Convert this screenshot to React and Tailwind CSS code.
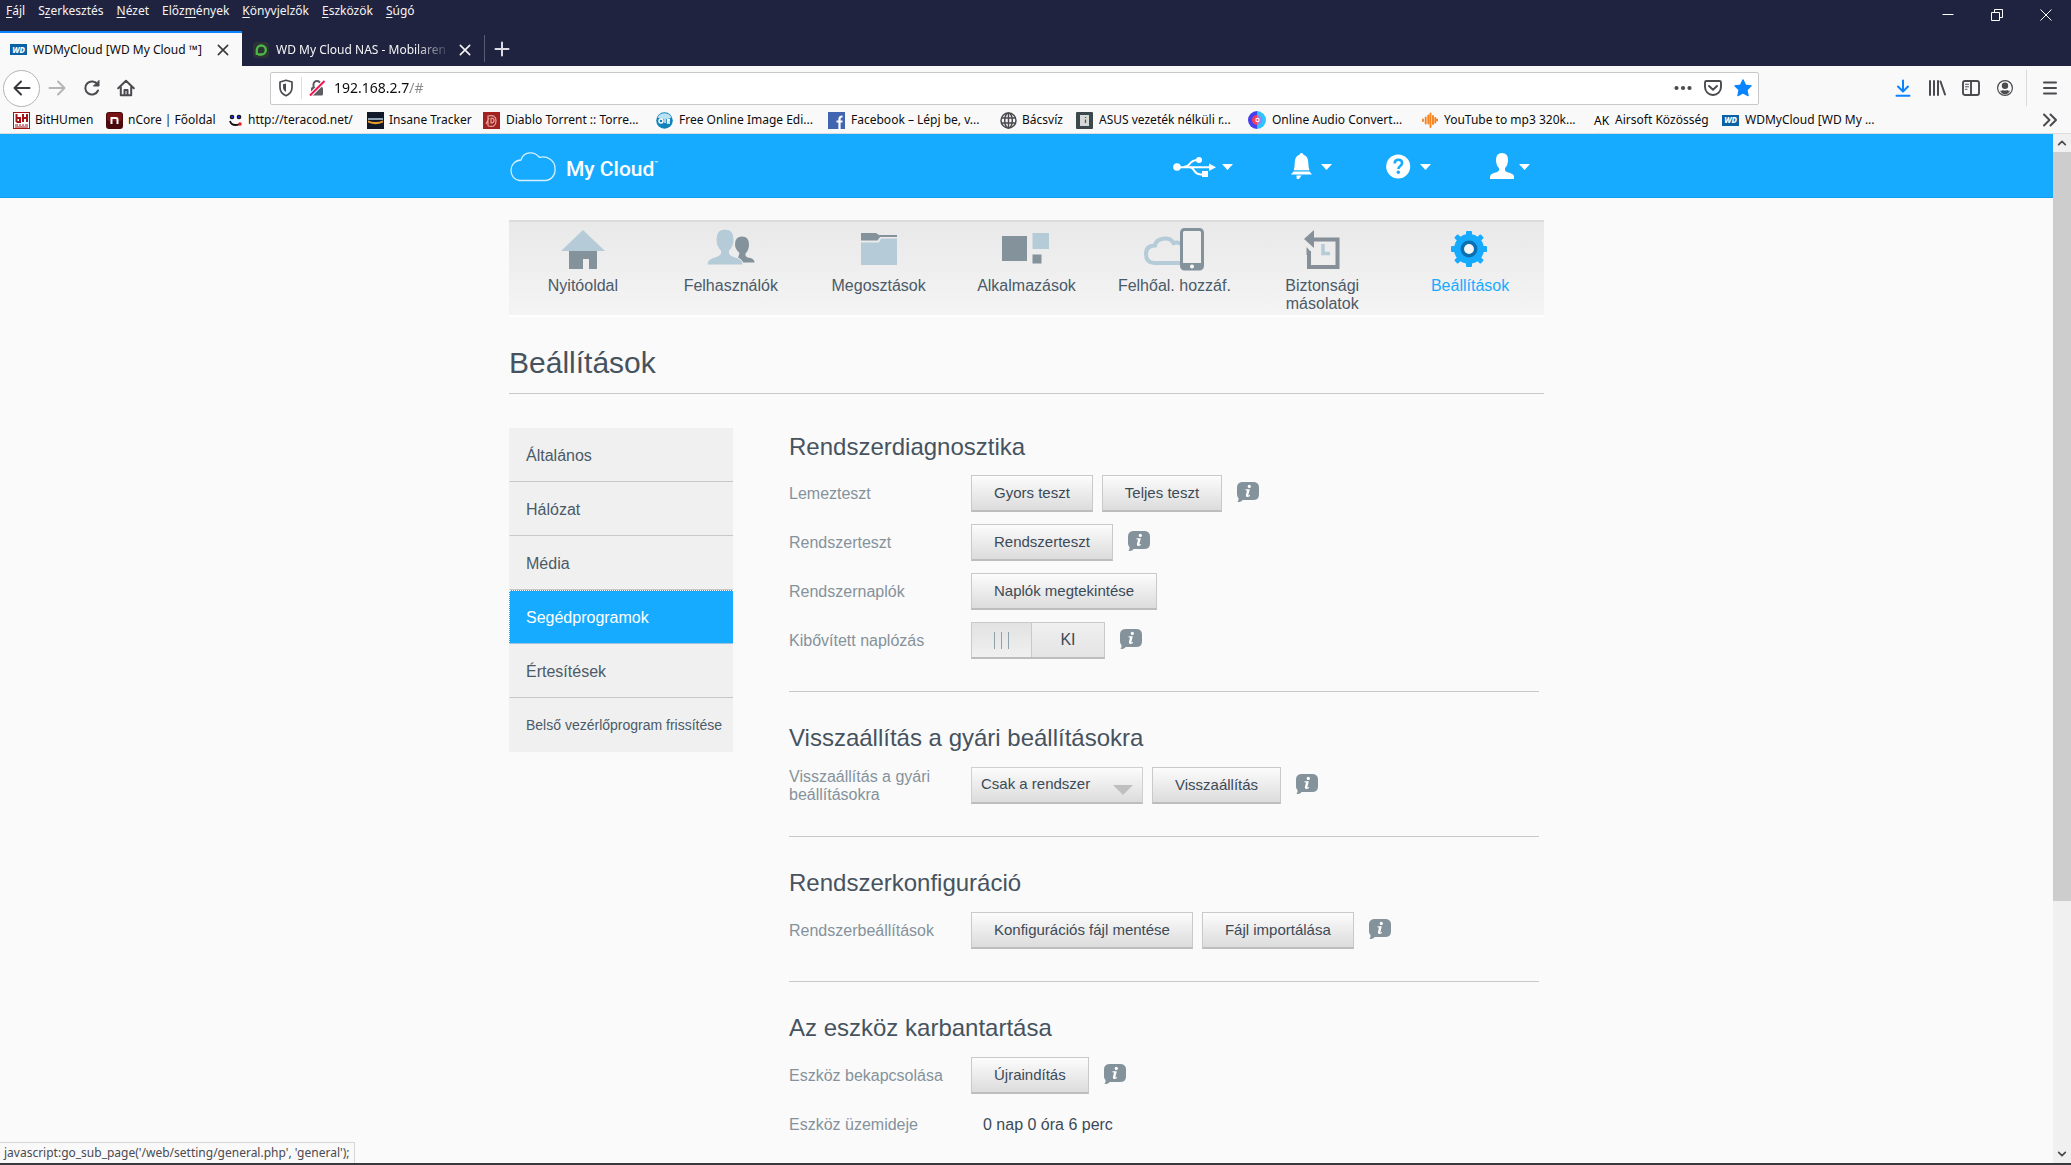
import React from "react";

const UI = "font-['Noto_Sans','Open_Sans',sans-serif]";

/* ---------- browser glyphs ---------- */

const Line = ({ size = "size-[18px]", children, w = 2 }) => (
  <svg viewBox="0 0 18 18" className={`${size} shrink-0`} fill="none" stroke="currentColor" strokeWidth={w} strokeLinecap="round" strokeLinejoin="round" aria-hidden="true">
    {children}
  </svg>
);

const CloseX = () => (
  <Line size="size-[14px]" w={2}>
    <path d="M3 3 15 15M15 3 3 15" />
  </Line>
);

const WdBadge = () => (
  <span className="flex h-[11px] w-[17px] shrink-0 items-center justify-center bg-[#0a62a6] text-[8px] font-extrabold italic leading-none text-white">WD</span>
);

const Favicons = {
  bh: (
    <svg viewBox="0 0 17 17" className="size-[17px] shrink-0" aria-hidden="true">
      <rect width="17" height="17" fill="#a01416" />
      <rect x="1" y="1" width="15" height="15" fill="#fff" />
      <path d="M3.5 2v8M3.5 6h3.5v4H3.5M10 2v8M14 2v8M10 6h4" stroke="#a01416" strokeWidth="2" fill="none" />
      <path d="M2 13h3M6 13h2M9 13h2M12 13h3M2 15h13" stroke="#a01416" strokeWidth="1.2" />
    </svg>
  ),
  ncore: (
    <svg viewBox="0 0 17 17" className="size-[17px] shrink-0" aria-hidden="true">
      <rect width="17" height="17" rx="3" fill="#4a0a0a" />
      <rect x="1" y="1" width="15" height="8" rx="2" fill="#7a1414" />
      <path d="M5.5 12V6h4.5q1.5 0 1.5 1.5V12" stroke="#fff" strokeWidth="2" fill="none" />
    </svg>
  ),
  teracod: (
    <svg viewBox="0 0 13 13" className="size-[13px] shrink-0" aria-hidden="true">
      <circle cx="3" cy="3" r="2.3" fill="#111" /><circle cx="10" cy="3" r="2.3" fill="#111" />
      <circle cx="3" cy="3" r="1.2" fill="#22e" /><circle cx="10" cy="3" r="1.2" fill="#22e" />
      <path d="M1 7q1 4 5.500 4t4-2" stroke="#111" strokeWidth="1.8" fill="none" />
      <circle cx="11" cy="10" r="1.7" fill="#f21818" />
    </svg>
  ),
  insane: (
    <svg viewBox="0 0 17 17" className="size-[17px] shrink-0" aria-hidden="true">
      <rect width="17" height="17" fill="#10182a" />
      <path d="M1 7h15" stroke="#b8cfe0" strokeWidth="1.500" />
      <path d="M1 8.500q7.500 3 15 0v2q-7.500 3.500-15 0z" fill="#e79a2b" />
    </svg>
  ),
  diablo: (
    <svg viewBox="0 0 17 17" className="size-[17px] shrink-0" aria-hidden="true">
      <rect width="17" height="17" fill="#a3211f" />
      <path d="M5 14V4q8-2 8 5t-8 5M8 6v5q3 0 3-2.500T8 6M3 12l3-6" stroke="#e2a7a2" strokeWidth="1.200" fill="none" />
    </svg>
  ),
  freeimg: (
    <svg viewBox="0 0 17 17" className="size-[17px] shrink-0" aria-hidden="true">
      <circle cx="8.500" cy="8.500" r="8.300" fill="#1183bd" />
      <path d="M1.500 5.500a8 8 0 0 1 14 0q-7 3-14 0" fill="#b9e2f5" />
      <circle cx="5" cy="9" r="2" stroke="#fff" strokeWidth="1.400" fill="none" />
      <path d="M9 7v4M14 7.500h-2.500v3.500H14M11.500 9H14" stroke="#fff" strokeWidth="1.300" fill="none" />
    </svg>
  ),
  facebook: (
    <svg viewBox="0 0 17 17" className="size-[17px] shrink-0" aria-hidden="true">
      <rect width="17" height="17" fill="#4165b0" />
      <path d="M11.500 17V7q0-2.500 3-2.500M8.500 9.500h6" stroke="#fff" strokeWidth="2.200" fill="none" />
    </svg>
  ),
  globe: (
    <svg viewBox="0 0 17 17" className="size-[17px] shrink-0" fill="none" stroke="#4a4a4f" strokeWidth="1.500" aria-hidden="true">
      <circle cx="8.500" cy="8.500" r="7.500" /><ellipse cx="8.500" cy="8.500" rx="3.800" ry="7.500" />
      <path d="M1.500 6h14M1.500 11h14M8.500 1v15" />
    </svg>
  ),
  asus: (
    <svg viewBox="0 0 17 17" className="size-[17px] shrink-0" aria-hidden="true">
      <rect width="17" height="17" rx="1" fill="#3c484c" />
      <rect x="4" y="3" width="9" height="11" fill="#d6d8d8" />
      <path d="M9.500 5v1M9.500 7.500V11" stroke="#555" strokeWidth="1.300" />
    </svg>
  ),
  audio: (
    <svg viewBox="0 0 18 18" className="size-[18px] shrink-0" aria-hidden="true">
      <path d="M9 0a9 9 0 0 0 0 18z" fill="#4440f2" /><path d="M9 0a9 9 0 0 1 0 18z" fill="#2fc4fb" />
      <path d="M9 4a5 5 0 0 0 0 10z" fill="#fb3d55" /><path d="M9 4a5 5 0 0 1 0 10z" fill="#8a86f5" />
      <circle cx="9.500" cy="9" r="2.300" fill="#f4e8f6" /><circle cx="9.500" cy="9" r="1" fill="#fb3d55" />
    </svg>
  ),
  wave: (
    <svg viewBox="0 0 16 16" className="size-[16px] shrink-0" stroke="#f5821f" strokeWidth="1.900" strokeLinecap="round" aria-hidden="true">
      <path d="M1 7.500v1.500M3.700 5.500v6M6.300 3.500v8M8.500 1.500v13.500M11 4v8M13.300 6v4.500M15.200 7.500v1" />
    </svg>
  ),
  ak: <span className="bg-white text-[12px] leading-[17px] text-black">AK</span>,
  wd: <WdBadge />,
};

const bookmarks = [
  { icon: "bh", label: "BitHUmen", w: "w-[93px]", gap: "gap-[5px]" },
  { icon: "ncore", label: "nCore | Főoldal", w: "w-[123px]", gap: "gap-[5px]" },
  { icon: "teracod", label: "http://teracod.net/", w: "w-[138px]" },
  { icon: "insane", label: "Insane Tracker", w: "w-[116px]", gap: "gap-[5px]" },
  { icon: "diablo", label: "Diablo Torrent :: Torre...", w: "w-[173px]" },
  { icon: "freeimg", label: "Free Online Image Edi...", w: "w-[172px]" },
  { icon: "facebook", label: "Facebook – Lépj be, v...", w: "w-[172px]" },
  { icon: "globe", label: "Bácsvíz", w: "w-[76px]", gap: "gap-[5px]" },
  { icon: "asus", label: "ASUS vezeték nélküli r...", w: "w-[172px]" },
  { icon: "audio", label: "Online Audio Convert...", w: "w-[174px]" },
  { icon: "wave", label: "YouTube to mp3 320k...", w: "w-[172px]" },
  { icon: "ak", label: "Airsoft Közösség", w: "w-[128px]" },
  { icon: "wd", label: "WDMyCloud [WD My ...", w: "w-[172px]" },
];

const menus = [
  ["", "F", "ájl"],
  ["S", "z", "erkesztés"],
  ["", "N", "ézet"],
  ["Előz", "m", "ények"],
  ["", "K", "önyvjelzők"],
  ["", "E", "szközök"],
  ["", "S", "úgó"],
];

function TitleBar() {
  return (
    <div className="flex h-[31px] items-start justify-between">
      <div className="flex gap-[13px] pl-[6px] pt-[2px] text-[12px] leading-[18px] text-[#f4f4f6]">
        {menus.map(([a, b, c]) => (
          <button key={a + b + c} type="button">
            {a}<span className="underline underline-offset-2">{b}</span>{c}
          </button>
        ))}
      </div>
      <div className="flex gap-[35px] pr-[18px] pt-[8px] text-white">
        <button type="button" aria-label="Kis méret"><svg viewBox="0 0 14 14" className="size-[14px]" stroke="currentColor" aria-hidden="true"><path d="M1.500 6.500h11" /></svg></button>
        <button type="button" aria-label="Előző méret"><svg viewBox="0 0 14 14" className="size-[14px]" stroke="currentColor" fill="none" aria-hidden="true"><path d="M1.500 4.500h8v8h-8zM4.500 4.500v-3h8v8h-3" /></svg></button>
        <button type="button" aria-label="Bezárás"><svg viewBox="0 0 14 14" className="size-[14px]" stroke="currentColor" aria-hidden="true"><path d="M1.500 1.500l11 11M12.500 1.500l-11 11" /></svg></button>
      </div>
    </div>
  );
}

function Tabs() {
  return (
    <div className="flex h-[35px] text-[12px]">
      <div className="flex w-[242px] items-center border-t-2 border-[#0a84ff] bg-[#f9f9fa] pl-[10px] pr-[12px] text-[#0c0c0d]">
        <WdBadge />
        <span className="ml-[6px] flex-1 whitespace-nowrap">WDMyCloud [WD My Cloud ™]</span>
        <button type="button" aria-label="Lap bezárása" className="text-[#38383d]"><CloseX /></button>
      </div>
      <div className="flex w-[242px] items-center pl-[11px] pr-[12px] pt-[2px] text-[#f4f4f6]">
        <svg viewBox="0 0 16 16" className="size-[16px] shrink-0" aria-hidden="true">
          <rect width="16" height="16" rx="4" fill="#2b3335" />
          <path d="M3.800 13V8a4.500 4.500 0 1 1 4.500 4.500H5" fill="none" stroke="#4fb748" strokeWidth="2.300" />
        </svg>
        <span className="ml-[7px] whitespace-nowrap [mask-image:linear-gradient(to_right,black_82%,rgba(0,0,0,0.15))]">WD My Cloud NAS - Mobilaren</span>
        <button type="button" aria-label="Lap bezárása" className="ml-auto"><CloseX /></button>
      </div>
      <div className="mt-[4px] h-[27px] w-px bg-[#5a5b70]" />
      <button type="button" aria-label="Új lap" className="ml-[8px] text-[#dcdce2]">
        <Line size="size-[18px]" w={2}><path d="M9 2.500v13M2.500 9h13" /></Line>
      </button>
    </div>
  );
}

function NavToolbar() {
  return (
    <div className="flex h-[44px] items-center text-[#4a4a4f]">
      <button type="button" aria-label="Vissza" className="ml-[3px] flex size-[37px] items-center justify-center rounded-full border border-[#b4b4b6] bg-white text-[#38383d]">
        <Line><path d="M16.500 9h-15M8 2.500 1.500 9 8 15.500" /></Line>
      </button>
      <button type="button" aria-label="Előre" className="ml-[8px] text-[#b5b5b7]"><Line><path d="M1.500 9h15M10 2.500 16.500 9 10 15.500" /></Line></button>
      <button type="button" aria-label="Frissítés" className="ml-[17px]">
        <Line><path d="M15 11.500A6.600 6.600 0 1 1 14.500 5.500" /><path d="M10.800 7H16V1.800z" fill="currentColor" strokeWidth="1" /></Line>
      </button>
      <button type="button" aria-label="Kezdőlap" className="ml-[16px]">
        <Line><path d="M1.200 9.200 9 1.800l7.800 7.400M3.800 8v8.200h10.400V8M7.500 16v-5h3v5" /></Line>
      </button>
      <div className="ml-[135px] flex h-[33px] flex-1 items-center rounded-[2px] border border-[#c9c9ca] bg-white pl-[6px] pr-[6px]">
        <Line w={1.700}><path d="M9 1.300 15 3v5.500c0 4-2.500 6.700-6 8.200-3.500-1.500-6-4.200-6-8.200V3z" /><path d="M9 4.500v8.500c-2-1.200-3-2.500-3-5V5.300z" fill="currentColor" stroke="none" /></Line>
        <div className="mx-[6px] h-[22px] w-px bg-[#dedee0]" />
        <svg viewBox="0 0 18 18" className="size-[18px] shrink-0" aria-hidden="true">
          <rect x="3" y="8" width="12" height="8.500" rx="1.500" fill="#5c5c61" />
          <path d="M5.500 8V5.500a3.500 3.500 0 0 1 7 0V8" fill="none" stroke="#5c5c61" strokeWidth="2" />
          <path d="M2.500 16 16.500 2" stroke="#fff" strokeWidth="4" /><path d="M2 16.500 16.500 2" stroke="#f5134f" strokeWidth="2" />
        </svg>
        <label htmlFor="url" className="sr-only">Cím</label>
        <input
          id="url"
          type="text"
          defaultValue="192.168.2.7/#"
          className="ml-[8px] min-w-0 flex-1 bg-[linear-gradient(to_right,#0c0c0d_76px,#8a8a8f_76px)] bg-clip-text text-[14px] leading-[20px] text-transparent outline-none"
        />
        <div className="flex items-center gap-[12px]">
          <svg viewBox="0 0 18 18" className="size-[18px]" fill="currentColor" aria-hidden="true"><circle cx="2.500" cy="9" r="2.100" /><circle cx="9" cy="9" r="2.100" /><circle cx="15.500" cy="9" r="2.100" /></svg>
          <Line w={1.900}><path d="M2.500 2h13q1.500 0 1.500 1.500V8c0 4.500-3.500 8-8 8s-8-3.500-8-8V3.500Q1 2 2.500 2z" /><path d="M5 7l4 3.800L13 7" /></Line>
          <svg viewBox="0 0 18 18" className="size-[18px]" fill="#0a84ff" stroke="#0a84ff" strokeLinejoin="round" strokeWidth="1.200" aria-hidden="true"><path d="M9 .8l2.500 5.300 5.700.7-4.200 4 1.100 5.900L9 13.900l-5.100 2.800 1.100-5.900-4.200-4 5.700-.7z" /></svg>
        </div>
      </div>
      <div className="ml-[135px] flex items-center gap-[16px]">
        <button type="button" aria-label="Letöltések" className="text-[#0a84ff]"><Line><path d="M9 1.500v10.500M4 7.500l5 5 5-5M2.500 16.800h13" /></Line></button>
        <button type="button" aria-label="Könyvtár"><Line><path d="M2 2v14M6 2v14M10 2v14M12.500 2.500 17 15.500" /></Line></button>
        <button type="button" aria-label="Oldalsáv"><Line w={1.900}><rect x="1" y="2" width="16" height="14" rx="2" /><path d="M9 2v14" /><path d="M3.500 5.200h3M3.500 7.700h3M3.500 10.200h1.500" strokeWidth="1.100" /></Line></button>
        <button type="button" aria-label="Fiók"><Line w={1.200}><circle cx="9" cy="9" r="7.400" /><circle cx="9" cy="6.800" r="3.200" fill="currentColor" stroke="none" /><path d="M4 11.500q1.500.8 2.700-.6 2.300 1.300 4.600 0 1.200 1.400 2.700.6-1.500 3.700-5 3.700T4 11.500z" fill="currentColor" stroke="none" /></Line></button>
      </div>
      <div className="ml-[12px] h-[36px] w-px bg-[#dadadc]" />
      <button type="button" aria-label="Menü" className="ml-[14px] mr-[12px]"><Line><path d="M3 3.500h12M3 9h12M3 14.500h12" /></Line></button>
    </div>
  );
}

function BookmarksBar() {
  return (
    <div className="flex h-[24px] items-center border-b border-[#dcdcdd] pb-[3px] pl-[13px] text-[12px] leading-[18px] text-[#0c0c0d]">
      {bookmarks.map((b) => (
        <a key={b.label} href="#" className={`flex shrink-0 items-center whitespace-nowrap ${b.gap || "gap-[6px]"} ${b.w}`}>
          {Favicons[b.icon]}
          <span>{b.label}</span>
        </a>
      ))}
      <button type="button" aria-label="További könyvjelzők" className="ml-auto mr-[12px] text-[#4a4a4f]">
        <Line><path d="M3 3.500 8.500 9 3 14.500M9.500 3.500 15 9l-5.500 5.500" /></Line>
      </button>
    </div>
  );
}

/* ---------- device page ---------- */

const Caret = () => (
  <svg viewBox="0 0 11 8" className="h-[8px] w-[11px]" fill="#fff" aria-hidden="true"><path d="M0 2h11L5.500 8z" /></svg>
);

const headerItems = [
  {
    label: "USB",
    icon: (
      <svg viewBox="0 0 49 26" className="h-[26px] w-[49px]" fill="#fff" stroke="#fff" aria-hidden="true">
        <circle cx="4" cy="14" r="3.800" stroke="none" />
        <path d="M4 14.200h34" strokeWidth="2" />
        <path d="M36 10.500 43 14.200 36 18z" stroke="none" />
        <path d="M11 14q4-.5 6-3.500t7-3.500M17 14q3 1 4.500 4t6 3.500h2" fill="none" strokeWidth="2" />
        <circle cx="26" cy="7" r="3" stroke="none" />
        <rect x="29" y="18" width="6" height="6" stroke="none" />
      </svg>
    ),
  },
  {
    label: "Riasztások",
    icon: (
      <svg viewBox="0 0 30 26" className="h-[26px] w-[30px]" fill="#fff" aria-hidden="true">
        <path d="M10.500 0q1.800 0 2 1.800 4.500 1.500 4.700 7 .3 6 1.300 8.500H2.700Q3.600 15 3.800 8.800 4 3.300 8.500 1.800 8.700 0 10.500 0z" />
        <path d="M2.500 18.500h16l2.500 3H0z" /><path d="M6 17.500h9" stroke="#5cc4ff" strokeWidth="1" />
        <path d="M5.500 22.500h5L8 26H5.700z" />
      </svg>
    ),
  },
  {
    label: "Súgó",
    icon: (
      <svg viewBox="0 0 34 26" className="h-[26px] w-[34px]" aria-hidden="true">
        <circle cx="12.200" cy="13.500" r="12" fill="#fff" />
        <path d="M8.700 10.500q0-3.700 3.700-3.700t3.700 3.200q0 1.800-2 3.200-1.700 1.200-1.700 2.700" fill="none" stroke="#17abff" strokeWidth="2.600" />
        <circle cx="12.300" cy="19.300" r="1.700" fill="#17abff" />
      </svg>
    ),
  },
  {
    label: "Felhasználó",
    icon: (
      <svg viewBox="0 0 29 26" className="h-[26px] w-[29px]" fill="#fff" aria-hidden="true">
        <path d="M12 0q6 0 6 7 0 5-3 8v2.500q1 1.500 5 2.500 4 1 4 4v2H0v-2q0-3 4-4 4-1 5-2.500V15Q6 12 6 7q0-7 6-7z" />
      </svg>
    ),
  },
];

function PageHeader() {
  return (
    <header className="border-b border-[#0f9df0] bg-[#17abff]">
      <div className="mx-auto flex h-[63px] w-full max-w-[1035px] items-center">
        <a href="#" className="flex items-center pt-[2px] text-white">
          <svg viewBox="0 0 48 30" className="h-[30px] w-[48px]" fill="none" stroke="#d6f0ff" strokeWidth="1.300" aria-hidden="true">
            <path d="M10.500 28.500h25.500a10.500 10.500 0 0 0 10-12c0-8-7.500-13-15.500-11.200C25-1.500 14.500-.5 12 8 5.500 8.500 2 13 2 18.500s3.500 9.500 8.500 10z" />
          </svg>
          <span className="ml-[9px] mt-[4px] flex items-start font-['Roboto',sans-serif] text-[21px] font-medium leading-[26px]">
            My Cloud<span className="text-[6px] leading-[14px]">™</span>
          </span>
        </a>
        <div className="ml-auto flex pr-[14px]">
          {headerItems.map((h) => (
            <button key={h.label} type="button" aria-label={h.label} className="flex w-[99px] items-center justify-end">
              {h.icon}
              <Caret />
            </button>
          ))}
        </div>
      </div>
    </header>
  );
}

const D = "#84929b";
const L = "#b5cbd8";

const navItems = [
  {
    label: "Nyitóoldal",
    icon: (
      <svg viewBox="0 0 44 44" className="size-[44px]" aria-hidden="true">
        <path d="M22 3 44 24H0z" fill={L} /><path d="M8 24h28v18h-8V32h-6v10H8z" fill={D} />
      </svg>
    ),
  },
  {
    label: "Felhasználók",
    icon: (
      <svg viewBox="0 0 48 44" className="h-[44px] w-[48px]" aria-hidden="true">
        <path d="M35 9.500q7 0 7 8 0 5.500-3.500 9v2q1 2 5 2.500 4 1.200 4 4.500H36q-1-2.500-5-4.500l1.500-5Q28 22 28 17.500q0-8 7-8z" fill={D} />
        <path d="M18 2q9 0 9 10.500 0 7-4.500 11v3.500q1.500 2 7 3.500 6.500 2 6.500 7.500H0q0-5.500 6.500-7.500 5.500-1.500 7-3.500v-3.500Q9 19.500 9 12.500 9 2 18 2z" fill={L} stroke="#ededed" strokeWidth="1" />
      </svg>
    ),
  },
  {
    label: "Megosztások",
    icon: (
      <svg viewBox="0 0 38 44" className="h-[44px] w-[38px]" aria-hidden="true">
        <path d="M1 6h15l3 2h18v2H20l-2.500 3.500H1z" fill={D} /><path d="M1 15.500h18l2-4h16V38H1z" fill={L} />
      </svg>
    ),
  },
  {
    label: "Alkalmazások",
    icon: (
      <svg viewBox="0 0 48 44" className="h-[44px] w-[48px]" aria-hidden="true">
        <path d="M0 9h25v25H0z" fill={D} /><path d="M30.500 6H47v16H30.500z" fill={L} /><path d="M30.500 27.500h9v9h-9z" fill={D} />
      </svg>
    ),
  },
  {
    label: "Felhőal. hozzáf.",
    icon: (
      <svg viewBox="0 0 60 44" className="h-[44px] w-[60px]" fill="none" aria-hidden="true">
        <path d="M37 36H10Q2 35.500 2 27t9-8.500c1-7 14-10 18.500-2.500Q34 14.500 37 17" stroke={L} strokeWidth="4" />
        <rect x="37.500" y="2.500" width="21" height="39.500" rx="3" stroke={D} strokeWidth="3" fill="#efefef" />
        <path d="M37 36h22v6H37z" fill={D} /><circle cx="48" cy="39.500" r="2" fill="#fff" />
      </svg>
    ),
  },
  {
    label: "Biztonsági másolatok",
    icon: (
      <svg viewBox="0 0 37 44" className="h-[44px] w-[37px]" fill="none" aria-hidden="true">
        <path d="M8 12.500h25.500V40H5V24" stroke="#878f99" strokeWidth="4" />
        <path d="M2.500 20 7 25v3H2.500z" fill="#878f99" />
        <path d="M10 3v18L0 12z" fill="#878f99" /><path d="M19 17v9.500h7" stroke={L} strokeWidth="3.500" />
      </svg>
    ),
  },
  {
    label: "Beállítások",
    active: true,
    icon: (
      <svg viewBox="0 0 40 44" className="h-[44px] w-[40px]" aria-hidden="true">
        <g fill="#17abff">
          <circle cx="19" cy="22" r="15" />
          <rect x="16" y="4" width="6" height="36" rx="1" />
          <rect x="16.500" y="3.500" width="5" height="37" rx="1" transform="rotate(45 19 22)" />
          <rect x="16" y="4" width="6" height="36" rx="1" transform="rotate(90 19 22)" />
          <rect x="16.500" y="3.500" width="5" height="37" rx="1" transform="rotate(135 19 22)" />
        </g>
        <circle cx="19" cy="22" r="6.700" fill="#f6f6f6" stroke="#0c6fb0" strokeWidth="3.500" />
      </svg>
    ),
  },
];

function MainNav() {
  return (
    <nav className="mt-[22px] grid min-h-[97px] grid-cols-7 border-b-2 border-t-2 border-b-white border-t-[#dcdcdc] bg-linear-to-b from-[#e9e9e9] to-[#f4f4f4]">
      {navItems.map((n) => (
        <a key={n.label} href="#" className={`flex flex-col items-center px-[12px] pt-[5px] text-center ${n.active ? "text-[#17abff]" : "text-[#4b5a68]"}`}>
          {n.icon}
          <span className="mt-[6px] leading-[18px]">{n.label}</span>
        </a>
      ))}
    </nav>
  );
}

const sideItems = ["Általános", "Hálózat", "Média", "Segédprogramok", "Értesítések", "Belső vezérlőprogram frissítése"];

function Sidebar() {
  return (
    <nav className="w-[224px] shrink-0 self-start">
      {sideItems.map((s, i) => {
        const active = s === "Segédprogramok";
        const last = i === sideItems.length - 1;
        return (
          <a
            key={s}
            href="#"
            className={`flex h-[54px] items-center whitespace-nowrap border-b border-l border-t pl-[16px] pt-[1px] ${
              active
                ? "border-b-[#9cc4dc] border-l-white border-t-white bg-[#17abff] text-white [border-left-style:dotted] [border-top-style:dotted]"
                : last
                  ? "border-[#f0f0f0] bg-[#f0f0f0] text-[14px] text-[#4b5a68]"
                  : "border-[#f0f0f0] border-b-[#c8c8c8] bg-[#f0f0f0] text-[#4b5a68]"
            }`}
          >
            {s}
          </a>
        );
      })}
    </nav>
  );
}

const Info = () => (
  <button type="button" aria-label="Információ" className="ml-[15px] shrink-0 pb-[4px]">
    <svg viewBox="0 0 22 20" className="h-[20px] w-[22px]" aria-hidden="true">
      <path d="M6 0h10q6 0 6 5.500v7Q22 18 16 18H5.500q-1 2-5 2 1.500-1.500 1-4Q0 14.500 0 12.500v-7Q0 0 6 0z" fill={D} />
      <circle cx="12.300" cy="4.400" r="1.600" fill="#fff" />
      <path d="M8.500 7.300h4.300l-1.500 6q.3.600 1.500-.2l.4.700q-1.700 1.500-3.200 1.300-1.500-.3-1.100-2l1.100-4.300q.1-.6-1.500-.6z" fill="#fff" />
    </svg>
  </button>
);

const Btn = ({ children }) => (
  <button type="button" className="h-[37px] whitespace-nowrap border border-b-2 border-[#c9c9c9] border-b-[#bdbdbd] bg-linear-to-b from-[#fcfcfc] to-[#dcdcdc] px-[22px] text-[15px] text-[#3c4a57]">
    {children}
  </button>
);

const Group = ({ children }) => <div className="flex gap-[9px]">{children}</div>;

const Row = ({ label, htmlFor, children }) => (
  <div className="flex h-[37px] items-center">
    {htmlFor ? (
      <label htmlFor={htmlFor} className="w-[182px] shrink-0 pr-[24px] leading-[18px] text-[#85929b]">{label}</label>
    ) : (
      <span className="w-[182px] shrink-0 pr-[12px] leading-[18px] text-[#85929b]">{label}</span>
    )}
    {children}
  </div>
);

const Section = ({ title, first, last, children }) => (
  <section className={`${first ? "pt-[5px]" : "pt-[32px]"} ${last ? "" : "border-b border-[#c8c8c8] pb-[32px]"}`}>
    <h2 className="text-[24px] leading-[28px] text-[#46535f]">{title}</h2>
    <div className={`flex flex-col gap-[12px] ${first ? "mt-[14px]" : "mt-[15px]"}`}>{children}</div>
  </section>
);

function Settings() {
  return (
    <main className="ml-[56px] mr-[5px] flex-1">
      <Section title="Rendszerdiagnosztika" first>
        <Row label="Lemezteszt">
          <Group><Btn>Gyors teszt</Btn><Btn>Teljes teszt</Btn></Group>
          <Info />
        </Row>
        <Row label="Rendszerteszt">
          <Group><Btn>Rendszerteszt</Btn></Group>
          <Info />
        </Row>
        <Row label="Rendszernaplók">
          <Group><Btn>Naplók megtekintése</Btn></Group>
        </Row>
        <Row label="Kibővített naplózás" htmlFor="extlog">
          <label htmlFor="extlog" className="flex h-[37px] w-[134px] cursor-pointer border border-b-2 border-[#c9c9c9] border-b-[#bdbdbd] text-[#3c4a57]">
            <input id="extlog" type="checkbox" className="sr-only" />
            <span className="flex w-[60px] items-center justify-center gap-[6px] border-r border-[#c9c9c9] bg-linear-to-b from-[#e2e2e2] to-[#f0f0f0]">
              <span className="h-[17px] w-px bg-[#8fa0ab]" />
              <span className="h-[17px] w-px bg-[#8fa0ab]" />
              <span className="h-[17px] w-px bg-[#8fa0ab]" />
            </span>
            <span className="flex flex-1 items-center justify-center bg-linear-to-b from-[#f0f0f0] to-[#e4e4e4]">KI</span>
          </label>
          <Info />
        </Row>
      </Section>
      <Section title="Visszaállítás a gyári beállításokra">
        <Row label="Visszaállítás a gyári beállításokra" htmlFor="restore">
          <div className="relative mr-[9px]">
            <select id="restore" className="h-[37px] w-[172px] appearance-none border border-b-2 border-[#d0d0d0] border-b-[#bdbdbd] bg-linear-to-b from-[#fcfcfc] to-[#dcdcdc] pb-[2px] pl-[9px] text-[15px] text-[#3c4a57]">
              <option>Csak a rendszer</option>
            </select>
            <svg viewBox="0 0 20 10" className="pointer-events-none absolute bottom-[9px] right-[10px] h-[10px] w-[20px]" fill="#bfbfbf" aria-hidden="true"><path d="M0 0h20L10 10z" /></svg>
          </div>
          <Group><Btn>Visszaállítás</Btn></Group>
          <Info />
        </Row>
      </Section>
      <Section title="Rendszerkonfiguráció">
        <Row label="Rendszerbeállítások">
          <Group><Btn>Konfigurációs fájl mentése</Btn><Btn>Fájl importálása</Btn></Group>
          <Info />
        </Row>
      </Section>
      <Section title="Az eszköz karbantartása" last>
        <Row label="Eszköz bekapcsolása">
          <Group><Btn>Újraindítás</Btn></Group>
          <Info />
        </Row>
        <Row label="Eszköz üzemideje">
          <span className="ml-[12px] text-[#3c4a57]">0 nap 0 óra 6 perc</span>
        </Row>
      </Section>
    </main>
  );
}

const Scrollbar = () => (
  <div className="flex w-[18px] shrink-0 flex-col bg-[#f0f0f0] text-[#4a4a4a]">
    <div className="flex h-[18px] items-center justify-center"><Line size="size-[10px]" w={3}><path d="M3 12l6-6 6 6" /></Line></div>
    <div className="flex-[749] bg-[#cdcdcd]" />
    <div className="flex-[244]" />
    <div className="flex h-[18px] items-center justify-center"><Line size="size-[10px]" w={3}><path d="M3 6l6 6 6-6" /></Line></div>
  </div>
);

export default function App() {
  return (
    <div className="flex h-screen flex-col overflow-hidden border-b-2 border-[#38383d] bg-[#fafafa]">
      <div className={`shrink-0 bg-[#f9f9fa] ${UI}`}>
        <div className="bg-[#20233f]">
          <TitleBar />
          <Tabs />
        </div>
        <NavToolbar />
        <BookmarksBar />
      </div>
      <div className="relative flex min-h-0 flex-1">
        <div className="min-w-0 flex-1 overflow-hidden font-['Liberation_Sans',Arial,sans-serif] text-[16px]">
          <PageHeader />
          <div className="mx-auto max-w-[1035px]">
            <MainNav />
            <h1 className="mt-[28px] border-b border-[#c9c9c9] pb-[12px] text-[30px] leading-[36px] text-[#46535f]">Beállítások</h1>
            <div className="mt-[34px] flex">
              <Sidebar />
              <Settings />
            </div>
          </div>
        </div>
        <Scrollbar />
        <div className={`absolute bottom-0 left-0 border-r border-t border-[#d7d7d9] bg-[#f9f9fa] px-[4px] text-[12px] leading-[20px] text-[#4a4a4f] ${UI}`}>
          {"javascript:go_sub_page('/web/setting/general.php', 'general');"}
        </div>
      </div>
    </div>
  );
}
